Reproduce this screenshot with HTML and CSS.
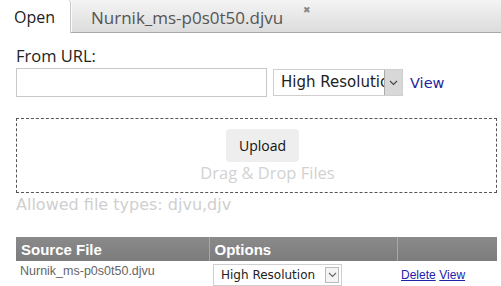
FILE: index.html
```html
<!DOCTYPE html>
<html>
<head>
<meta charset="utf-8">
<link rel="stylesheet" href="styles.css">
</head>
<body>
<div class="tabs">
  <div class="tab active">Open</div>
  <div class="tab">Nurnik_ms-p0s0t50.djvu<span class="close">&#x2716;</span></div>
</div>
<div class="content">
  <div class="label">From URL:</div>
  <div class="url-row">
    <input class="url" type="text">
    <div class="sel big"><span class="sel-text">High Resolution</span><span class="arrow"><svg width="9" height="6" viewBox="0 0 9 6"><path d="M1 1 L4.5 4.5 L8 1" fill="none" stroke="#444" stroke-width="1.1"/></svg></span></div>
    <a class="view" href="#">View</a>
  </div>
  <div class="drop">
    <button class="upload">Upload</button>
    <div class="dnd">Drag &amp; Drop Files</div>
  </div>
  <div class="allowed">Allowed file types: djvu,djv</div>
  <table class="files">
    <thead>
      <tr><th class="c1">Source File</th><th class="c2">Options</th><th class="c3"></th></tr>
    </thead>
    <tbody>
      <tr>
        <td class="name">Nurnik_ms-p0s0t50.djvu</td>
        <td><div class="sel small"><span class="sel-text">High Resolution</span><span class="arrow"><svg width="9" height="6" viewBox="0 0 9 6"><path d="M1 1 L4.5 4.5 L8 1" fill="none" stroke="#666" stroke-width="1.1"/></svg></span></div></td>
        <td class="links"><a href="#">Delete</a> <a href="#">View</a></td>
      </tr>
    </tbody>
  </table>
</div>
</body>
</html>
```
FILE: styles.css
```css
html, body { margin: 0; padding: 0; background: #fff; }
body { width: 501px; height: 286px; overflow: hidden; font-family: "Open Sans", sans-serif; }

.tabs {
  display: flex;
  height: 32px;
  background: linear-gradient(#f4f4f4, #dcdcdc);
  border-bottom: 1px solid #a9a9a9;
}
.tab {
  font-size: 17px;
  color: #555;
  line-height: 35px;
  padding: 0 0 0 19px;
  border-left: 1px solid #fafafa;
  display: flex;
  align-items: flex-start;
}
.tab.active {
  width: 71px;
  box-sizing: border-box;
  padding-left: 14px;
  font-size: 16px;
  color: #222;
  background: #fff;
  height: 33px;
  border-left: none;
  border-right: 1px solid #c8c8c8;
  border-top-right-radius: 3px;
}
.close {
  font-size: 9px;
  color: #888;
  line-height: 20px;
  margin-left: 20px;
}

.content { padding: 12px 4px 0 16px; }
.label { font-size: 16.5px; color: #222; line-height: 22px; height: 22px; }
.url-row { display: flex; align-items: center; margin-top: 1px; }
.url {
  width: 251px; height: 29px; box-sizing: border-box;
  border: 1px solid #c8c8c8; margin: 0; padding: 0;
}
.sel {
  display: flex; align-items: stretch; box-sizing: border-box;
  border: 1px solid #cfcfcf; background: #fff;
  font-family: "DejaVu Sans", Verdana, sans-serif; color: #222;
}
.sel.big { width: 130px; height: 27px; margin-left: 6px; font-size: 15px; }
.sel-text { flex: 1; overflow: hidden; white-space: nowrap; padding-left: 7px; line-height: 25px; }
.sel.big .arrow {
  width: 17px; background: #d8d8d8; border-left: 1px solid #aaa;
  display: flex; align-items: center; justify-content: center;
}
.view { margin-left: 7px; font-family: "DejaVu Sans", Verdana, sans-serif; font-size: 14.5px; color: #1f1f9c; text-decoration: none; }

.drop {
  margin-top: 21px;
  height: 75px; box-sizing: border-box;
  border: 1px dashed #555;
  display: flex; flex-direction: column; align-items: center;
  padding: 10px 0 0 12px;
}
.upload {
  width: 73px; height: 33px; border: none; border-radius: 4px;
  background: #eeeeee; font-family: "Open Sans", sans-serif; font-size: 14px; color: #111;
  padding: 0;
}
.dnd { font-size: 16.5px; color: #d2d2d2; line-height: 20px; margin-top: 1px; margin-left: 10px; }
.allowed {
  font-family: "DejaVu Sans", Verdana, sans-serif; font-size: 16px; color: #cfcfcf;
  line-height: 20px; margin-top: 2px;
}

.files {
  margin-top: 22px; width: 481px; border-collapse: collapse;
  font-family: "Liberation Sans", Arial, sans-serif;
}
.files th {
  background: linear-gradient(#8a8a8a, #7c7c7c);
  color: #fff; font-weight: bold; font-size: 15px; text-align: left;
  height: 24px; padding: 0 0 0 5px; box-sizing: border-box;
  border-left: 1px solid #a8a8a8;
}
.files th.c1 { width: 193px; border-left: none; }
.files th.c2 { width: 188px; }
.files td { padding: 3px 0 0 4px; vertical-align: top; font-size: 13px; }
.files td.name { color: #666; padding-top: 3px; font-size: 12.5px; }
.sel.small { width: 129px; height: 22px; font-size: 12px; }
.sel.small .sel-text { line-height: 20px; }
.sel.small .arrow {
  width: 12px; margin: 2px 2px 2px 0; border: 1px solid #bbb; background: #f4f4f4;
  display: flex; align-items: center; justify-content: center;
}
.links { padding-top: 6px !important; }
.links a { color: #2222aa; font-size: 12px; }
```
